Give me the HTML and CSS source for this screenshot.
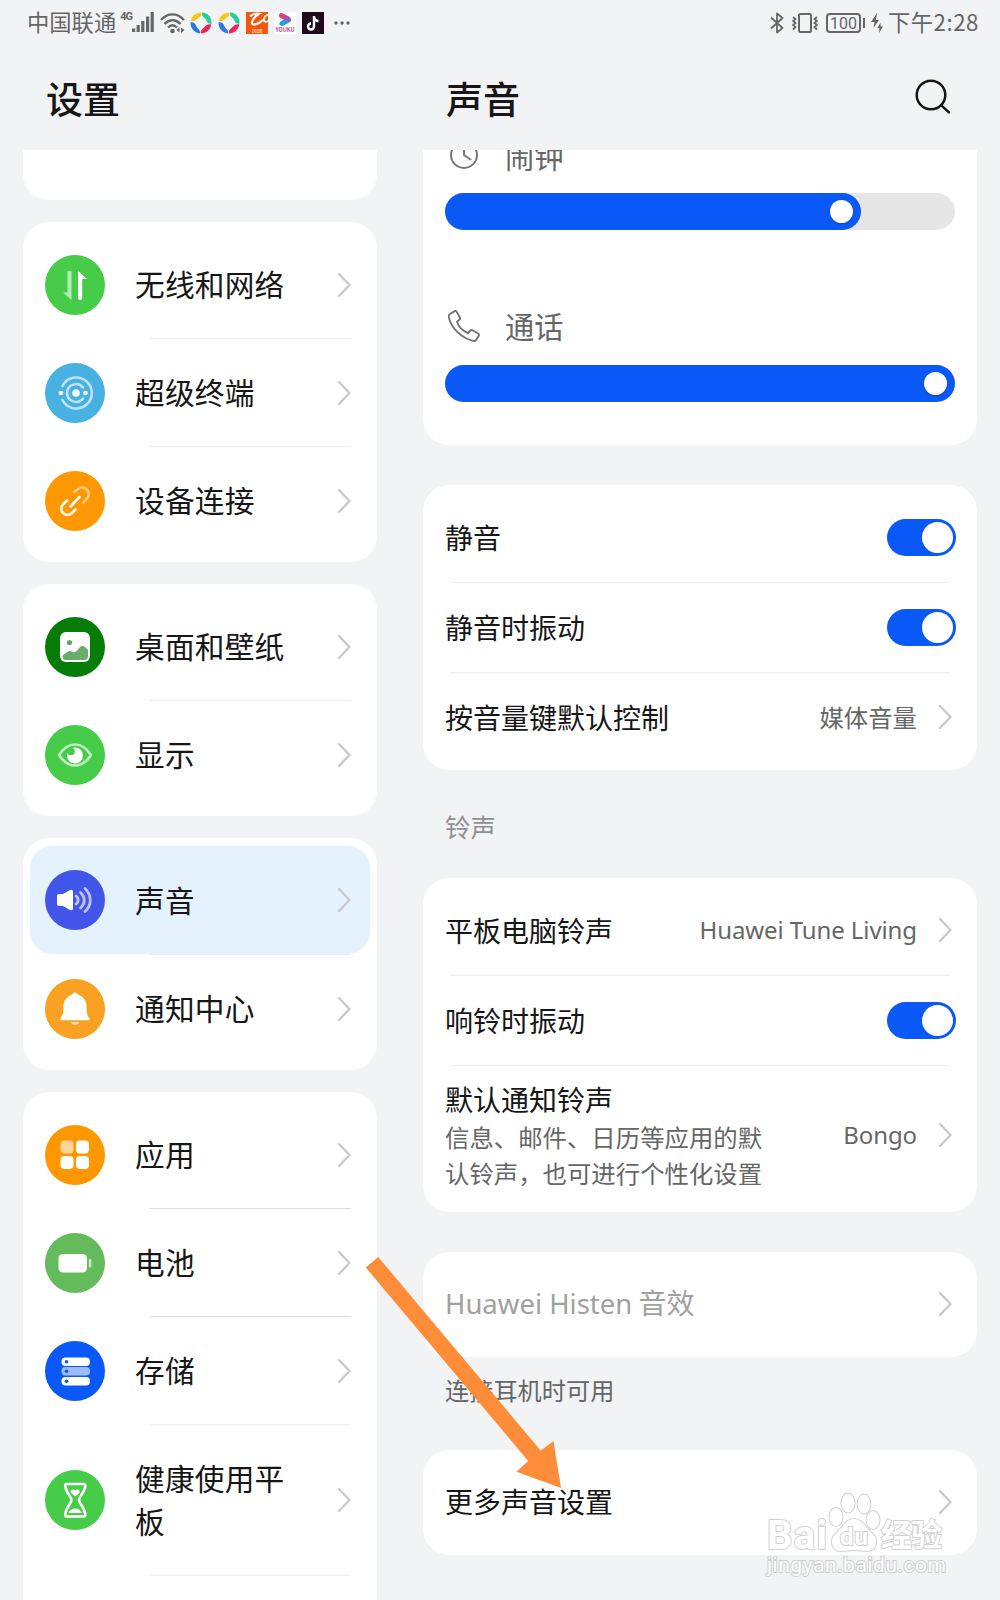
FILE: index.html
```html
<!DOCTYPE html>
<html lang="zh-CN">
<head>
  <meta charset="UTF-8" />
  <meta name="viewport" content="width=device-width, initial-scale=1" />
  <title>设置 - 声音</title>
  <link rel="stylesheet" href="styles.css">
</head>
<body>

<svg class="defs">
  <symbol id="chevron" viewBox="0 0 14 26"><path d="M2 2 12.500 13 2 24" fill="none" stroke="currentColor" stroke-width="2.400" stroke-linecap="round" stroke-linejoin="round"/></symbol>
  <symbol id="swirl" viewBox="0 0 22 22">
    <path d="M1 9C1.500 4 6 .5 11 .5c1 3-1 4-3 6-2 1-4 3.500-7 2.500z" fill="#fcc419"/>
    <path d="M12 .5c6 .5 10 5 9.500 11-3 1-4.500-1-5.500-4-1-2-5-3-4-7z" fill="#24cf94"/>
    <path d="M21.300 12.500c-.8 5-5 9-10.300 9-1-3 1-4 3-6s4-4 7.300-3z" fill="#f0245c"/>
    <path d="M.5 10.500c3-1 5 1 6 4 1 2.500 4 3 3.500 7C4.500 21 .3 16 .5 10.500z" fill="#2a78e8"/>
  </symbol>
</svg>

<div class="screen">

  <div class="statusbar">
    <span class="carrier">中国联通</span>
    <span class="net">4G</span>
    <svg class="signal" viewBox="0 0 22 20"><path d="M1.600 16.500V20M6.200 13v7M10.800 9v11M15.600 4.500V20M20.200 0v20" stroke="#666" stroke-width="3.200"/></svg>
    <svg class="wifi" viewBox="0 0 25 21"><g fill="none" stroke="#666" stroke-width="2.300"><path d="M1 7C8-.5 17-.5 24 7M4.500 11c5-5 11-5 16 0M8 14.500c3-3 6-3 9 0"/></g><circle cx="12.500" cy="18" r="2.300" fill="#666"/><path d="M19.500 14v5.500l-3-2.500M21 20v-5.500l3.500 2.500" fill="#666"/></svg>
    <svg class="app" viewBox="0 0 22 22"><use href="#swirl"/></svg>
    <svg class="app" viewBox="0 0 22 22"><use href="#swirl"/></svg>
    <svg class="app" viewBox="0 0 22 22"><rect width="22" height="22" fill="#f2570a"/><path d="M4 4.500C6 2 10 1.500 13 1.800 9 4 7 7 6 10c-1 4 6 3 11-2" fill="none" stroke="#fff" stroke-width="2.200"/><path d="M22 2.500c-4 1.500-5.500 6-2.500 7.500l2.500-1" fill="none" stroke="#fff" stroke-width="1.800"/><text x="11" y="20.500" font-size="5" fill="#fff" text-anchor="middle">1688</text></svg>
    <svg class="app" viewBox="0 0 22 22"><rect width="22" height="22" rx="2" fill="#fff"/><path d="M7.500 3.500 14 7" stroke="#f0386e" stroke-width="5" stroke-linecap="round"/><path d="M14.500 8 8 11.500" stroke="#1fa0e8" stroke-width="5" stroke-linecap="round"/><path d="M11.500 5.500l3 2" stroke="#b24bb0" stroke-width="4" stroke-linecap="round"/><text x="11" y="20" font-size="5.500" font-weight="bold" fill="#c04a94" text-anchor="middle">YOUKU</text></svg>
    <svg class="app" viewBox="0 0 22 22"><rect width="22" height="22" fill="#210a1c"/><path d="M12 4v10.500a3 3 0 1 1-3-3M12 5c.5 2.500 2 4 4.500 4" fill="none" stroke="#fff" stroke-width="2.400"/></svg>
    <svg class="dots" viewBox="0 0 16 4"><g fill="#666"><circle cx="2" cy="2" r="1.700"/><circle cx="8" cy="2" r="1.700"/><circle cx="14" cy="2" r="1.700"/></g></svg>

    <div class="status-right">
      <svg class="bt" viewBox="0 0 14 22"><path d="M1 5.500 12.500 16 7 20.500v-19L12.500 6 1 16.500" fill="none" stroke="#666" stroke-width="1.800" stroke-linejoin="round"/></svg>
      <svg class="vib" viewBox="0 0 26 20"><rect x="7" y="1" width="12" height="18" rx="1.500" fill="none" stroke="#666" stroke-width="2"/><path d="M1 4l2.500 2L1 8l2.500 2L1 12l2.500 2L1 16.500M25 4l-2.500 2L25 8l-2.500 2 2.500 2-2.500 2 2.500 2.500" fill="none" stroke="#666" stroke-width="1.800"/></svg>
      <span class="battery">100</span>
      <svg class="bolt" viewBox="0 0 12 20"><path d="M6 0 0 9h3.500l-1 6L8 7H5zM9.500 9.500 6.500 15h2l-.5 5 4-6.500H9.500z" fill="#666"/></svg>
      <span class="time">下午2:28</span>
    </div>
  </div>

  <div class="columns">
    <!-- 左侧菜单 -->
    <div class="left">
      <h1>设置</h1>
      <div class="scroll">
        <div class="card card-cut"></div>

        <div class="card">
          <div class="item">
            <svg class="icon" viewBox="0 0 60 60"><circle cx="30" cy="30" r="30" fill="#46cc49"/><path d="M22.500 16h4v29l-8.500-7.500h4.500z" fill="#fff" opacity=".6"/><path d="M33 16l9 8h-4.800v19a2 2 0 0 1-4.200 0z" fill="#fff"/></svg>
            <span>无线和网络</span><svg class="chev"><use href="#chevron"/></svg>
          </div>
          <div class="item">
            <svg class="icon" viewBox="0 0 60 60"><circle cx="30" cy="30" r="30" fill="#47b1e2"/><g fill="none" stroke="#fff" stroke-linecap="round" opacity=".65"><path d="M17.500 23a15.500 15.500 0 1 1 0 14" stroke-width="2.600"/><path d="M38 24.500a9 9 0 0 0-16 5.500 9 9 0 0 0 16 5.500" stroke-width="2.600"/></g><g fill="#fff"><circle cx="31" cy="30" r="3.800"/><circle cx="16" cy="30" r="2.300"/><circle cx="40.500" cy="30" r="2.300"/></g></svg>
            <span>超级终端</span><svg class="chev"><use href="#chevron"/></svg>
          </div>
          <div class="item">
            <svg class="icon" viewBox="0 0 60 60"><circle cx="30" cy="30" r="30" fill="#ff9800"/><g fill="none" stroke="#fff" stroke-width="2.600" stroke-linecap="round"><path d="M29.500 21l3.500-3c6-5 14 3 9.500 9L38.500 31.500" opacity=".55"/><path d="M22 29.500 18 33.500c-5 6 2 13.500 8.500 9l4-4M25.500 35.500l9-9.500"/></g></svg>
            <span>设备连接</span><svg class="chev"><use href="#chevron"/></svg>
          </div>
        </div>

        <div class="card">
          <div class="item">
            <svg class="icon" viewBox="0 0 60 60"><circle cx="30" cy="30" r="30" fill="#077d07"/><rect x="15" y="15" width="30" height="30" rx="6" fill="#fff"/><circle cx="24.500" cy="25.500" r="2.600" fill="#5fa863"/><path d="M18 38c3-2 5-4 7-4s3 2 5 1c3-1 4-6 7.500-6 2.500 0 3 2 5.500 4v6c0 2.500-1.500 4-4 4H21c-2.500 0-4-2-3-5z" fill="#67ad6b"/></svg>
            <span>桌面和壁纸</span><svg class="chev"><use href="#chevron"/></svg>
          </div>
          <div class="item">
            <svg class="icon" viewBox="0 0 60 60"><circle cx="30" cy="30" r="30" fill="#46cc49"/><path d="M14 30c9-14 23-14 32 0-9 14-23 14-32 0z" fill="none" stroke="#fff" stroke-width="2.600" stroke-linejoin="round" opacity=".65"/><circle cx="30" cy="30.500" r="8" fill="#fff"/><circle cx="26" cy="26.500" r="3.800" fill="#46cc49"/></svg>
            <span>显示</span><svg class="chev"><use href="#chevron"/></svg>
          </div>
        </div>

        <div class="card">
          <div class="item active">
            <svg class="icon" viewBox="0 0 60 60"><circle cx="30" cy="30" r="30" fill="#4156e8"/><path d="M12 26q0-2 2-2h4l7-4q3-1 3 1.500v17q0 2.500-3 1.500l-7-4h-4q-2 0-2-2z" fill="#fff"/><g fill="none" stroke="#fff" stroke-width="2.800" stroke-linecap="round" opacity=".65"><path d="M31 26c3 2 3 6 0 8"/><path d="M35.500 22.500c5 4.500 5 11 0 15.500"/><path d="M40 18.500c7 7 7 16.500 0 23"/></g></svg>
            <span>声音</span><svg class="chev"><use href="#chevron"/></svg>
          </div>
          <div class="item">
            <svg class="icon" viewBox="0 0 60 60"><circle cx="30" cy="30" r="30" fill="#f9a122"/><path d="M30 13.500c2 0 2 1.500 4 2.500 4.500 2 7.500 6 7.500 11 0 7 .5 9 2.800 12 1 1.500.4 2.200-.8 2.200h-27c-1.200 0-1.800-.7-.8-2.200 2.300-3 2.800-5 2.800-12 0-5 3-9 7.500-11 2-1 2-2.500 4-2.500z" fill="#fff"/><path d="M26 43h8c-.5 3.800-7.500 3.800-8 0z" fill="#fff" opacity=".65"/></svg>
            <span>通知中心</span><svg class="chev"><use href="#chevron"/></svg>
          </div>
        </div>

        <div class="card">
          <div class="item dark-line">
            <svg class="icon" viewBox="0 0 60 60"><circle cx="30" cy="30" r="30" fill="#ff9800"/><g fill="#fff"><rect x="15.500" y="15.500" width="13" height="13" rx="4" opacity=".6"/><rect x="31" y="15.500" width="13" height="13" rx="4"/><rect x="15.500" y="31" width="13" height="13" rx="4"/><rect x="31" y="31" width="13" height="13" rx="4"/></g></svg>
            <span>应用</span><svg class="chev"><use href="#chevron"/></svg>
          </div>
          <div class="item dark-line">
            <svg class="icon" viewBox="0 0 60 60"><circle cx="30" cy="30" r="30" fill="#64bb5c"/><rect x="13.500" y="21" width="28.500" height="18.500" rx="4.500" fill="#fff"/><rect x="43.800" y="26" width="2.600" height="8.500" rx="1.300" fill="#fff" opacity=".65"/></svg>
            <span>电池</span><svg class="chev"><use href="#chevron"/></svg>
          </div>
          <div class="item">
            <svg class="icon" viewBox="0 0 60 60"><circle cx="30" cy="30" r="30" fill="#0a59f7"/><g fill="#fff"><rect x="16.500" y="16.500" width="28.500" height="8.500" rx="4"/><rect x="16.500" y="26" width="28.500" height="8.500" rx="4" opacity=".6"/><rect x="16.500" y="36" width="28.500" height="8.500" rx="4"/></g><g fill="#0a59f7"><circle cx="21.500" cy="20.700" r="1.800"/><circle cx="21.500" cy="30.300" r="1.800"/><circle cx="21.500" cy="40.200" r="1.800"/></g></svg>
            <span>存储</span><svg class="chev"><use href="#chevron"/></svg>
          </div>
          <div class="item item-tall">
            <svg class="icon" viewBox="0 0 60 60"><circle cx="30" cy="30" r="30" fill="#46cc49"/><path d="M22 14h16.500c1.500 0 2 .8 1.800 2C39.500 23 34 26.500 34 30s5.500 7 6.300 14.500c.2 1.200-.3 2-1.800 2H22c-1.500 0-2-.8-1.800-2C21 37 26.500 33.500 26.500 30S21 23 20.200 16c-.2-1.200.3-2 1.800-2z" fill="none" stroke="#fff" stroke-width="2.600"/><path d="M30.200 26.500c-3-2-4.500-3.500-4.500-5 0-2.200 3.200-3 4.500-.8 1.300-2.200 4.500-1.400 4.500.8 0 1.500-1.500 3-4.500 5zM23.500 43c1-3 3.500-4.500 6.700-4.500s5.700 1.500 6.700 4.500z" fill="#fff"/></svg>
            <span>健康使用平板</span><svg class="chev"><use href="#chevron"/></svg>
          </div>
          <div class="item">
            <svg class="icon" viewBox="0 0 60 60"><circle cx="30" cy="30" r="30" fill="#20b8a6"/></svg>
          </div>
        </div>
      </div>
    </div>

    <!-- 右侧声音设置 -->
    <div class="right">
      <h1>声音
        <svg class="search" viewBox="0 0 36 36"><g fill="none" stroke="#161616" stroke-width="2.500" stroke-linecap="round"><circle cx="16" cy="16" r="14.300"/><path d="M26.300 26.300 34 33.300"/></g></svg>
      </h1>
      <div class="scroll">
        <div class="card volumes">
          <div class="vol-name vol-cut">
            <svg class="vol-icon" viewBox="0 0 32 32"><g fill="none" stroke="#737373" stroke-width="1.900" stroke-linecap="round"><circle cx="16" cy="16" r="13"/><path d="M16 8v8l6.500 4.500"/></g></svg>
            <span>闹钟</span>
          </div>
          <div class="slider"><div class="fill" style="width: 81.5%"></div></div>
          <div class="vol-name">
            <svg class="vol-icon" viewBox="0 0 32 32"><path d="M2 4 6.500 1.200c1-.5 1.700-.2 2.200.7l3.200 5.600c.5 1 .3 1.700-.5 2.300L9 11.800c1.500 5 5.500 9 11 11.200l2.300-2.500c.7-.7 1.400-.8 2.300-.3l5.600 3.300c1 .6 1 1.300.5 2.200L28 30.200c-.8 1-1.700 1-3 .7C13 28 2.500 17 .9 7.500.7 6 .8 4.800 2 4z" fill="none" stroke="#737373" stroke-width="1.900" stroke-linejoin="round"/></svg>
            <span>通话</span>
          </div>
          <div class="slider"><div class="fill" style="width: 100%"></div></div>
        </div>

        <div class="card group">
          <div class="row"><span>静音</span><div class="toggle"></div></div>
          <div class="row"><span>静音时振动</span><div class="toggle"></div></div>
          <div class="row"><span>按音量键默认控制</span><em>媒体音量</em><svg class="chev"><use href="#chevron"/></svg></div>
        </div>

        <div class="section">铃声</div>

        <div class="card ring">
          <div class="row"><span>平板电脑铃声</span><em class="en">Huawei Tune Living</em><svg class="chev"><use href="#chevron"/></svg></div>
          <div class="row"><span>响铃时振动</span><div class="toggle"></div></div>
          <div class="row row-tall">
            <div class="text">
              <span>默认通知铃声</span>
              <p>信息、邮件、日历等应用的默认铃声，也可进行个性化设置</p>
            </div>
            <em class="en">Bongo</em><svg class="chev"><use href="#chevron"/></svg>
          </div>
        </div>

        <div class="card single">
          <div class="row off"><span><b class="en">Huawei Histen</b> 音效</span><svg class="chev"><use href="#chevron"/></svg></div>
        </div>
        <div class="hint">连接耳机时可用</div>

        <div class="card single">
          <div class="row"><span>更多声音设置</span><svg class="chev"><use href="#chevron"/></svg></div>
        </div>
      </div>
    </div>
  </div>

  <svg class="arrow" viewBox="0 0 196 232"><path d="M13.200 1 .8 11.500l162.400 193.500-11.600 10.700L196 232l-7.500-46.700-12.800 9.300z" fill="#ff8c38"/></svg>

  <svg class="watermark" viewBox="0 0 190 94">
    <g fill="#fff" stroke="#c9c9cc" stroke-width="2" paint-order="stroke">
      <text class="wm-logo" x="4" y="58" textLength="60">Bai</text>
      <path d="M91 28c6 0 9 4 12 8 5 6 10 8 10 15 0 6-4 9-9 9-4 0-8-1-13-1s-9 1-13 1c-5 0-9-3-9-9 0-7 5-9 10-15 3-4 6-8 12-8z"/>
      <ellipse cx="73" cy="26" rx="6.500" ry="9"/>
      <ellipse cx="85" cy="12" rx="6.500" ry="9.500"/>
      <ellipse cx="101" cy="13" rx="6.500" ry="9.500"/>
      <ellipse cx="110" cy="29" rx="6.500" ry="9"/>
      <text class="wm-du" x="77" y="54" textLength="28">du</text>
      <text class="wm-cn" x="118" y="55" textLength="61">经验</text>
      <text class="wm-url" x="4" y="81" textLength="179">jingyan.baidu.com</text>
    </g>
  </svg>
</div>

</body>
</html>
```
FILE: styles.css
```css
* {
  box-sizing: border-box;
}

body {
  margin: 0;
  background: #f2f3f5;
  color: #161616;
  font-family: "Noto Sans CJK SC", sans-serif;
}

.defs {
  display: none;
}

.screen {
  position: relative;
  width: 1000px;
  height: 1600px;
  overflow: hidden;
}

/* 状态栏 */
.statusbar {
  display: flex;
  align-items: center;
  height: 46px;
  padding: 0 23px 0 27px;
  color: #666;
  font-size: 22.3px;
  line-height: 43px;
}

.carrier, .time {
  height: 46px;
}

.net {
  align-self: flex-start;
  margin: 11px 0 0 4px;
  width: 12px;
  font: bold 11px/12px Roboto, sans-serif;
  letter-spacing: -1px;
}

.signal { width: 22px; height: 20px; margin-bottom: 2px; }
.wifi { width: 25px; height: 21px; margin: 0 5px 0 6px; }
.app { width: 22px; height: 22px; margin-right: 6px; }
.dots { width: 16px; height: 4px; margin-left: 4px; }

.status-right {
  display: flex;
  align-items: center;
  margin-left: auto;
}

.bt { width: 14px; height: 22px; margin-right: 8px; }
.vib { width: 26px; height: 20px; margin-right: 8px; }
.bolt { width: 12px; height: 20px; margin: 0 5px 0 4px; }

.time {
  width: 89px;
  letter-spacing: .5px;
  white-space: nowrap;
}

.battery {
  position: relative;
  width: 35px;
  height: 20px;
  margin-right: 6px;
  border: 2px solid #666;
  border-radius: 4px;
  font: 16px/17px Roboto, sans-serif;
  text-align: center;
}

.battery::after {
  content: "";
  position: absolute;
  right: -6px;
  top: 3px;
  width: 2px;
  height: 10px;
  background: #666;
}

/* 两栏 */
.columns {
  display: flex;
  gap: 46px;
  padding-left: 23px;
}

.left { width: 354px; }
.right { width: 554px; }

h1 {
  display: flex;
  justify-content: space-between;
  align-items: center;
  height: 104px;
  margin: 0;
  padding: 0 26px 0 23px;
  font-size: 37px;
  font-weight: 500;
  line-height: 102px;
}

.search {
  width: 36px;
  height: 36px;
  margin-bottom: 2px;
}

.scroll {
  height: 1450px;
  overflow: hidden;
}

.card {
  margin-bottom: 22px;
  padding: 8px 0;
  background: #fff;
  border-radius: 26px;
}

.card-cut {
  height: 50px;
  border-radius: 0 0 26px 26px;
}

.item {
  position: relative;
  display: flex;
  align-items: center;
  height: 108px;
  padding: 1px 26px 0 22px;
  font-size: 29.7px;
  line-height: 43px;
}

.item span {
  width: 160px;
  margin-left: 30px;
  padding-bottom: 2px;
  letter-spacing: .2px;
}

.icon {
  width: 60px;
  height: 60px;
  flex: none;
}

.chev {
  width: 14px;
  height: 26px;
  margin-left: auto;
  flex: none;
  color: #cacacc;
}

.item + .item::before {
  content: "";
  position: absolute;
  top: 0;
  left: 127px;
  right: 26px;
  height: 1px;
  background: #ededed;
}

.dark-line + .item::before {
  background: #dedede;
}

.item-tall {
  height: 151px;
}

.active {
  margin: 0 7px;
  padding: 0 19px 0 15px;
  background: #e4f2fe;
  border-radius: 22px;
}

/* 音量条 */
.volumes {
  display: flow-root;
  height: 295px;
  margin-bottom: 40px;
  padding: 0 22px;
  border-radius: 0 0 26px 26px;
  overflow: hidden;
}

.vol-name {
  display: flex;
  align-items: center;
  height: 44px;
  margin-top: 74px;
  margin-bottom: 17px;
  padding-left: 3px;
  color: #666;
  font-size: 29.3px;
  line-height: 44px;
}

.vol-name span {
  margin-left: 25px;
  padding-bottom: 2px;
}

.vol-icon {
  width: 32px;
  height: 32px;
}

.vol-cut {
  margin-top: -17px;
  margin-bottom: 16px;
}

.vol-cut span {
  padding-bottom: 0;
}

.slider {
  height: 37px;
  background: #e6e6e6;
  border-radius: 19px;
}

.fill {
  display: flex;
  align-items: center;
  justify-content: flex-end;
  height: 37px;
  padding-right: 8px;
  background: #0a59f7;
  border-radius: 19px;
}

.fill::after {
  content: "";
  width: 23px;
  height: 23px;
  background: #fff;
  border-radius: 50%;
  box-shadow: 0 1px 2px rgba(0,0,0,0.25);
}

.group, .ring, .single {
  padding: 7px 0 8px;
}

.row {
  position: relative;
  display: flex;
  align-items: center;
  height: 90px;
  padding: 0 25px 0 22px;
  font-size: 28px;
  line-height: 40px;
}

.row > span {
  padding-bottom: 1px;
}

.row + .row::before {
  content: "";
  position: absolute;
  top: 0;
  left: 27px;
  right: 27px;
  height: 1px;
  background: #ededed;
}

.row em {
  margin-left: auto;
  margin-right: 21px;
  color: #666;
  font-size: 24.4px;
  font-style: normal;
}

.row em + .chev {
  margin-left: 0;
}

.row .en {
  font-family: "Noto Sans", sans-serif;
  font-weight: 400;
}

.row em.en {
  font-size: 24px;
  letter-spacing: -.1px;
}

.row b.en {
  font-size: 27.5px;
}

.toggle {
  width: 69px;
  height: 37px;
  margin-left: auto;
  margin-right: -4px;
  padding: 3px;
  background: #0a59f7;
  border-radius: 19px;
}

.toggle::after {
  content: "";
  display: block;
  width: 31px;
  height: 31px;
  margin-left: auto;
  background: #fff;
  border-radius: 50%;
}

.section {
  height: 86px;
  padding-left: 22px;
  color: #8f8f91;
  font-size: 25.4px;
  line-height: 69px;
}

.ring {
  margin-bottom: 40px;
  padding-bottom: 7px;
}

.row-tall {
  height: 140px;
}

.text {
  width: 320px;
  padding-bottom: 1px;
}

.text p {
  width: 320px;
  margin: 0;
  color: #666;
  font-size: 24.4px;
  line-height: 36px;
}

.single {
  height: 105px;
  margin-bottom: 0;
}

.single .row > span {
  padding-bottom: 2px;
}

.off {
  color: #a0a0a0;
}

.hint {
  height: 93px;
  padding-left: 22px;
  color: #666;
  font-size: 24.2px;
  line-height: 65px;
}

/* 箭头和水印盖在页面上 */
.arrow {
  position: absolute;
  left: 365px;
  top: 1256px;
  width: 196px;
  height: 232px;
}

.watermark {
  position: absolute;
  left: 763px;
  top: 1491px;
  width: 190px;
  height: 94px;
  opacity: .85;
}

.wm-logo {
  font: bold 40px Roboto, sans-serif;
}

.wm-du {
  font: bold 24px Roboto, sans-serif;
}

.wm-cn {
  font: bold 31px "Noto Sans CJK SC", sans-serif;
}

.wm-url {
  font: 21px Roboto, sans-serif;
}
```
